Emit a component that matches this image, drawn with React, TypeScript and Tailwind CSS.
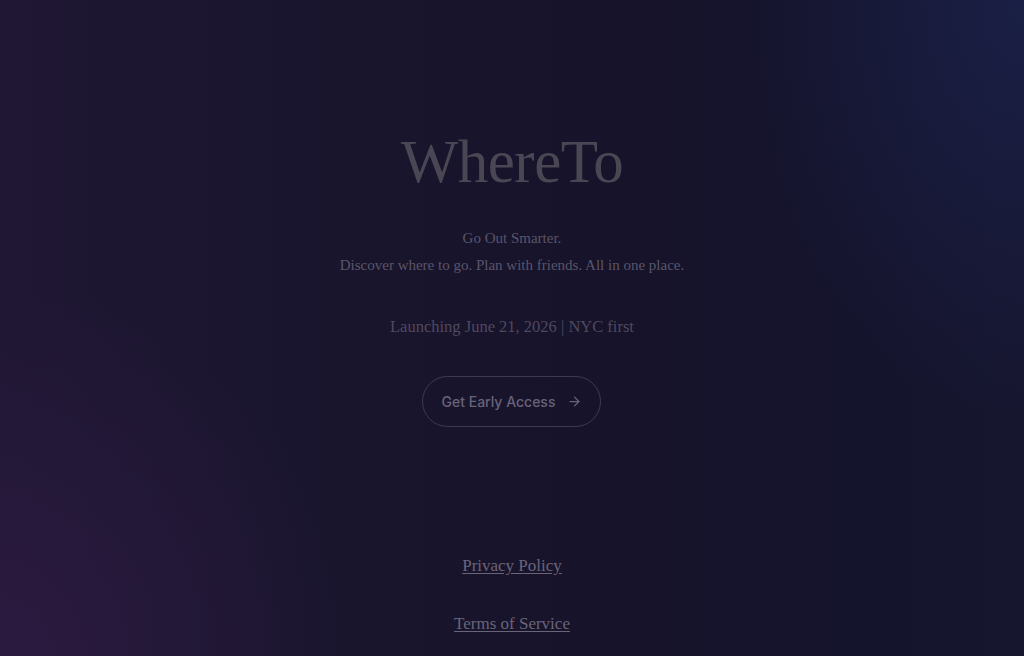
import { ArrowRight } from "lucide-react";

export default function App() {
  return (
    <div className="relative flex min-h-screen flex-col items-center overflow-hidden bg-[#17142a] bg-[radial-gradient(ellipse_45%_75%_at_0%_100%,#2b1a40_0%,rgba(43,26,64,0)_75%),radial-gradient(ellipse_35%_80%_at_100%_0%,#1a1f45_0%,rgba(26,31,69,0)_80%),linear-gradient(90deg,#1f1733_0%,#19152d_35%,#16132a_60%,#15142d_85%,#16162f_100%)] font-['Liberation_Serif','DejaVu_Serif',serif]">
      <main className="flex flex-col items-center pt-[126px]">
        <h1 className="text-[61px] leading-[72px] tracking-[-0.5px] text-[#4b4654]">WhereTo</h1>
        <p className="mt-[30px] text-[15px] leading-[20px] text-[#5b5569]">Go Out Smarter.</p>
        <p className="mt-[7px] text-[15px] leading-[20px] text-[#5b5569]">
          Discover where to go. Plan with friends. All in one place.
        </p>
        <p className="mt-[40px] text-[16.5px] leading-[24px] text-[#4f4960]">
          Launching June 21, 2026 | NYC first
        </p>
        <button className="mt-[37px] flex h-[51px] w-[179px] items-center justify-center gap-3 rounded-full border border-[#3f3a50] font-['Inter',sans-serif] text-[14px] font-medium text-[#69637a]">
          Get Early Access
          <ArrowRight size={15} strokeWidth={2} />
        </button>
      </main>
      <footer className="mt-auto flex flex-col items-center gap-[38px] pb-[22px] text-[17px] leading-[20px] text-[#6a6479]">
        <a className="underline underline-offset-2">Privacy Policy</a>
        <a className="underline underline-offset-2">Terms of Service</a>
      </footer>
    </div>
  );
}
